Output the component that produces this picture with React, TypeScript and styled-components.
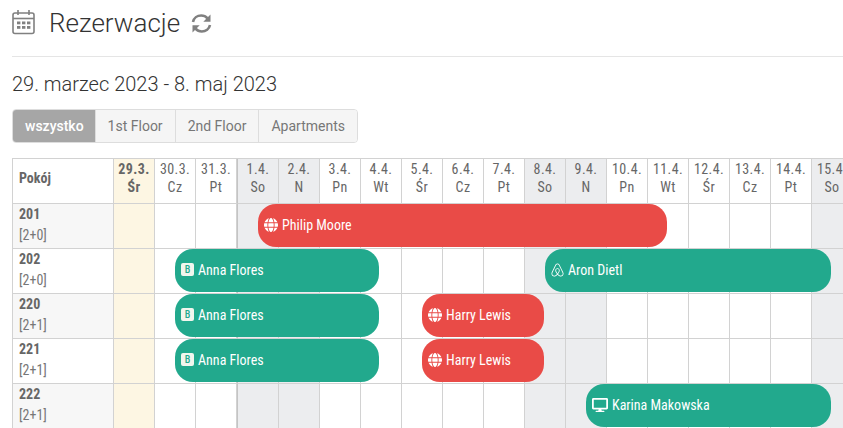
import React from 'react';
import styled, { createGlobalStyle } from 'styled-components';
import { FaAirbnb, FaDesktop, FaGlobe } from 'react-icons/fa';

const GlobalStyle = createGlobalStyle`
  html, body {
    margin: 0;
    padding: 0;
    width: 843px;
    height: 428px;
    overflow: hidden;
    background: #fff;
    font-family: Roboto, "Liberation Sans", sans-serif;
  }
  * { box-sizing: border-box; }
`;

const Page = styled.div`
  width: 843px;
  height: 428px;
  overflow: hidden;
  padding-left: 12px;
`;

const Header = styled.header`
  display: flex;
  align-items: center;
  height: 57px;
  padding-bottom: 10px;
  border-bottom: 1px solid #e5e5e5;
`;

const Title = styled.h1`
  margin: 0 11px 0 13px;
  font-size: 26px;
  font-weight: 300;
  color: #333;
`;

const DateRange = styled.h2`
  margin: 15px 0 13px;
  font-size: 20px;
  line-height: 24px;
  font-weight: 300;
  color: #333;
`;

const Tabs = styled.div`
  display: inline-flex;
  height: 34px;
  border: 1px solid #ddd;
  border-radius: 4px;
  overflow: hidden;
  margin-bottom: 15px;
  vertical-align: top;
`;

const Tab = styled.div<{ $active?: boolean }>`
  display: flex;
  align-items: center;
  padding: 0 12px;
  font-size: 14px;
  font-weight: ${(p) => (p.$active ? 500 : 400)};
  color: ${(p) => (p.$active ? '#fff' : '#777')};
  background: ${(p) => (p.$active ? '#a6a6a6' : '#f5f5f5')};
  ${(p) => p.$active && 'padding-right: 11px;'}
  & + & { border-left: 1px solid #ddd; }
`;

const Grid = styled.div`
  width: 851px;
  border-top: 1px solid #d2d2d2;
  border-left: 1px solid #d2d2d2;
`;

const Row = styled.div`
  position: relative;
  display: grid;
  grid-template-columns: 101px 41px 41px 41px 42px repeat(14, 41px);
  height: 45px;
`;

const Cell = styled.div`
  border-right: 1px solid #d2d2d2;
  border-bottom: 1px solid #d2d2d2;
`;

const RoomHead = styled(Cell)`
  padding: 10px 0 0 6px;
  font-size: 14px;
  line-height: 18px;
  font-weight: 700;
  font-stretch: 75%;
  color: #666;
`;

const RoomCell = styled(Cell)<{ $shaded: boolean }>`
  padding: 0 0 0 6px;
  background: ${(p) => (p.$shaded ? '#f7f7f7' : '#fff')};
  color: #777;
  font-size: 14px;
  line-height: 21px;
  font-stretch: 75%;
`;

const RoomName = styled.div`
  font-weight: 700;
  color: #666;
`;

const DayHead = styled(Cell)<{ $today: boolean; $weekend: boolean; $monthStart: boolean }>`
  padding-top: 1px;
  text-align: center;
  font-size: 14px;
  line-height: 18px;
  font-stretch: 75%;
  letter-spacing: 0.4px;
  font-weight: ${(p) => (p.$today ? 700 : 400)};
  color: #666;
  background: ${(p) => (p.$today ? '#fdf6e3' : p.$weekend ? '#ecedef' : '#fff')};
  ${(p) => p.$monthStart && 'border-left: 1px solid #c4c4c4;'}
`;

const DayCell = styled(Cell)<{ $today: boolean; $weekend: boolean; $monthStart: boolean }>`
  background: ${(p) => (p.$today ? '#fdf6e3' : p.$weekend ? '#ecedef' : '#fff')};
  ${(p) => p.$monthStart && 'border-left: 1px solid #c4c4c4;'}
`;

const Bar = styled.div<{ $color: 'red' | 'green' }>`
  position: absolute;
  top: 0;
  height: 43px;
  display: flex;
  align-items: center;
  gap: 4px;
  padding: 0 0 2px 6px;
  border-radius: 18px;
  background: ${(p) => (p.$color === 'red' ? '#e94b47' : '#22a98d')};
  color: #fff;
  font-size: 14px;
  font-weight: 450;
  font-stretch: 75%;
  white-space: nowrap;
`;

const BarIcon = styled.span<{ $wide?: boolean }>`
  display: flex;
  align-items: center;
  justify-content: center;
  width: ${(p) => (p.$wide ? 16 : 14)}px;
  height: 16px;

  svg { width: 100%; height: 100%; }
`;

const AirbnbIcon = styled(BarIcon)`
  width: 13px;
`;

const BookingBadge = styled.span`
  display: flex;
  align-items: center;
  justify-content: center;
  width: 13px;
  height: 13px;
  border-radius: 2px;
  background: #f2f6ee;
  color: #22a98d;
  font-size: 10px;
  font-weight: 500;
`;

const CalendarSvg = styled.svg`
  margin-bottom: 2px;
`;

const CalendarIcon = () => (
  <CalendarSvg width="24" height="26" viewBox="0 0 24 26" fill="none">
    <rect x="1" y="4" width="21" height="20.5" rx="2" stroke="#808080" strokeWidth="1.6" />
    <path d="M1 9.5h21" stroke="#808080" strokeWidth="1.6" />
    <path d="M6 1v5M17 1v5" stroke="#808080" strokeWidth="1.6" />
    <g fill="#808080">
      <rect x="5" y="12.5" width="3.4" height="2.8" />
      <rect x="10" y="12.5" width="3.4" height="2.8" />
      <rect x="15" y="12.5" width="3.4" height="2.8" />
      <rect x="5" y="17" width="3.4" height="2.8" />
      <rect x="10" y="17" width="3.4" height="2.8" />
      <rect x="15" y="17" width="3.4" height="2.8" />
    </g>
  </CalendarSvg>
);

const RefreshIcon = () => (
  <svg width="21" height="21" viewBox="0 0 21 21" fill="none">
    <path d="M2 9C2.8 5 6.2 2.5 10.2 2.5c2.6 0 4.7 1 6.3 2.8" stroke="#808080" strokeWidth="2.6" />
    <path d="M19.5 1.5v7.2h-7.2z" fill="#808080" />
    <path d="M19 12c-.8 4-4.2 6.5-8.2 6.5-2.6 0-4.7-1-6.3-2.8" stroke="#808080" strokeWidth="2.6" />
    <path d="M1.5 19.5v-7.2h7.2z" fill="#808080" />
  </svg>
);

const days = [
  ['29.3.', 'Śr'], ['30.3.', 'Cz'], ['31.3.', 'Pt'], ['1.4.', 'So'], ['2.4.', 'N'], ['3.4.', 'Pn'],
  ['4.4.', 'Wt'], ['5.4.', 'Śr'], ['6.4.', 'Cz'], ['7.4.', 'Pt'], ['8.4.', 'So'], ['9.4.', 'N'],
  ['10.4.', 'Pn'], ['11.4.', 'Wt'], ['12.4.', 'Śr'], ['13.4.', 'Cz'], ['14.4.', 'Pt'], ['15.4.', 'So'],
];

type Source = 'web' | 'booking' | 'airbnb' | 'desk';

interface Booking {
  name: string;
  from: number;
  to: number;
  source: Source;
  color: 'red' | 'green';
}

const rooms: { name: string; size: string; bookings: Booking[] }[] = [
  { name: '201', size: '[2+0]', bookings: [{ name: 'Philip Moore', from: 3, to: 13, source: 'web', color: 'red' }] },
  {
    name: '202',
    size: '[2+0]',
    bookings: [
      { name: 'Anna Flores', from: 1, to: 6, source: 'booking', color: 'green' },
      { name: 'Aron Dietl', from: 10, to: 17, source: 'airbnb', color: 'green' },
    ],
  },
  {
    name: '220',
    size: '[2+1]',
    bookings: [
      { name: 'Anna Flores', from: 1, to: 6, source: 'booking', color: 'green' },
      { name: 'Harry Lewis', from: 7, to: 10, source: 'web', color: 'red' },
    ],
  },
  {
    name: '221',
    size: '[2+1]',
    bookings: [
      { name: 'Anna Flores', from: 1, to: 6, source: 'booking', color: 'green' },
      { name: 'Harry Lewis', from: 7, to: 10, source: 'web', color: 'red' },
    ],
  },
  { name: '222', size: '[2+1]', bookings: [{ name: 'Karina Makowska', from: 11, to: 17, source: 'desk', color: 'green' }] },
];

// middle of a day column, measured from the grid's left edge
const dayMiddle = (d: number) => 101 + 41 * d + (d >= 3 ? 21 : 20);

const SourceIcon = ({ source }: { source: Source }) => {
  if (source === 'booking') return <BookingBadge>B</BookingBadge>;
  if (source === 'airbnb') return <AirbnbIcon><FaAirbnb /></AirbnbIcon>;
  if (source === 'desk') return <BarIcon $wide><FaDesktop /></BarIcon>;
  return <BarIcon><FaGlobe /></BarIcon>;
};

const isWeekend = (d: number) => days[d][1] === 'So' || days[d][1] === 'N';

const App = () => (
  <Page>
    <GlobalStyle />
    <Header>
      <CalendarIcon />
      <Title>Rezerwacje</Title>
      <RefreshIcon />
    </Header>
    <DateRange>29. marzec 2023 - 8. maj 2023</DateRange>
    <Tabs>
      <Tab $active>wszystko</Tab>
      <Tab>1st Floor</Tab>
      <Tab>2nd Floor</Tab>
      <Tab>Apartments</Tab>
    </Tabs>
    <Grid>
      <Row>
        <RoomHead>Pokój</RoomHead>
        {days.map(([date, name], i) => (
          <DayHead key={date} $today={i === 0} $weekend={isWeekend(i)} $monthStart={i === 3}>
            {date}
            <br />
            {name}
          </DayHead>
        ))}
      </Row>
      {rooms.map((room, r) => (
        <Row key={room.name}>
          <RoomCell $shaded={r % 2 === 0}>
            <RoomName>{room.name}</RoomName>
            {room.size}
          </RoomCell>
          {days.map(([date], i) => (
            <DayCell key={date} $today={i === 0} $weekend={isWeekend(i)} $monthStart={i === 3} />
          ))}
          {room.bookings.map((b) => (
            <Bar
              key={b.name}
              $color={b.color}
              style={{ left: dayMiddle(b.from), width: 41 * (b.to - b.from) - 1 }}
            >
              <SourceIcon source={b.source} />
              {b.name}
            </Bar>
          ))}
        </Row>
      ))}
    </Grid>
  </Page>
);

export default App;
